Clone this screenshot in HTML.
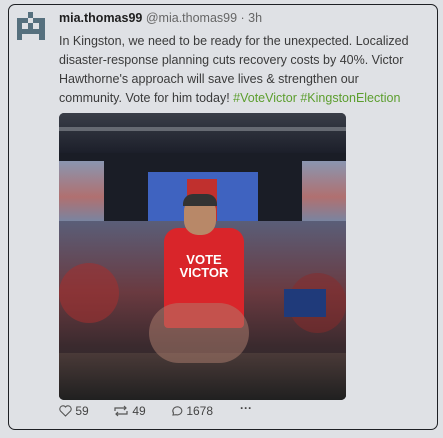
<!DOCTYPE html>
<html><head><style>
*{margin:0;padding:0;box-sizing:border-box}
body{width:443px;height:438px;background:#dfe1e5;font-family:"Liberation Sans",sans-serif;position:relative;overflow:hidden}
.card{position:absolute;left:8px;top:4px;width:430px;height:426px;border:1px solid #1e2024;border-radius:7px;}
.av div{position:absolute;width:5.6px;height:5.6px;background:#56707e}
.name{position:absolute;left:59px;top:11px;font-size:12.5px;color:#222}
.name b{font-weight:bold;color:#1e1e1e}
.name span{color:#666}
.txt{position:absolute;left:59px;top:32px;width:362px;font-size:12.5px;line-height:19px;color:#3a3a3a}
.txt a{color:#5c9e2e}
.img{position:absolute;left:59px;top:113px;width:287px;height:287px;border-radius:5px;overflow:hidden;background:#1a1d26}
.img div{position:absolute}
.act{position:absolute;top:404px;font-size:12px;color:#444}
</style></head><body>
<div class="card"></div>
<div class="av">
<div style="left:27.8px;top:12px"></div>
<div style="left:16.6px;top:17.6px"></div><div style="left:22.2px;top:17.6px"></div><div style="left:33.4px;top:17.6px"></div><div style="left:39px;top:17.6px"></div>
<div style="left:16.6px;top:23.2px"></div><div style="left:27.8px;top:23.2px"></div><div style="left:39px;top:23.2px"></div>
<div style="left:16.6px;top:28.8px;width:28px"></div>
<div style="left:16.6px;top:34.4px"></div><div style="left:39px;top:34.4px"></div>
</div>
<div class="name"><b>mia.thomas99</b> <span>@mia.thomas99 · 3h</span></div>
<div class="txt">In Kingston, we need to be ready for the unexpected. Localized disaster-response planning cuts recovery costs by 40%. Victor Hawthorne's approach will save lives &amp; strengthen our community. Vote for him today! <a>#VoteVictor</a> <a>#KingstonElection</a></div>
<div class="img">
<div style="left:0;top:0;width:287px;height:40px;background:linear-gradient(#3a3e48,#1c1f2a)"></div>
<div style="left:0;top:14px;width:287px;height:4px;background:#666a72"></div>
<div style="left:0;top:48px;width:45px;height:60px;background:linear-gradient(#8a96b0,#b07070 60%,#7a84a0)"></div>
<div style="left:243px;top:48px;width:44px;height:60px;background:linear-gradient(#8a96b0,#b07070 60%,#7a84a0)"></div>
<div style="left:89px;top:59px;width:110px;height:50px;background:#3f63c0"></div>
<div style="left:128px;top:66px;width:30px;height:44px;background:#c0302e"></div>
<div style="left:0;top:108px;width:287px;height:179px;background:linear-gradient(#5a5e78,#6a3a40 40%,#3a2a2e 70%,#2a2628)"></div>
<div style="left:0;top:150px;width:60px;height:60px;background:#a03030;opacity:.6;border-radius:30px"></div>
<div style="left:230px;top:160px;width:57px;height:60px;background:#8a2a2a;opacity:.5;border-radius:30px"></div>
<div style="left:105px;top:115px;width:80px;height:100px;background:#d9252a;border-radius:14px 14px 4px 4px"></div>
<div style="left:125px;top:84px;width:32px;height:38px;background:#b88868;border-radius:14px"></div>
<div style="left:124px;top:81px;width:34px;height:12px;background:#333;border-radius:10px 10px 0 0"></div>
<div style="left:112px;top:140px;width:66px;font:bold 13px 'Liberation Sans',sans-serif;color:#fff;text-align:center;line-height:13px">VOTE<br>VICTOR</div>
<div style="left:225px;top:176px;width:42px;height:28px;background:#1f3a7a"></div>
<div style="left:0;top:240px;width:287px;height:47px;background:linear-gradient(#4a3a38,#202020)"></div>
<div style="left:90px;top:190px;width:100px;height:60px;background:#b08070;opacity:.5;border-radius:40px"></div>
</div>
<div class="act" style="left:59px"><svg width="13" height="12" viewBox="0 0 13 12" style="vertical-align:-2px"><path d="M6.5 11 L1.5 6 A2.8 2.8 0 0 1 6.5 2 A2.8 2.8 0 0 1 11.5 6 Z" fill="none" stroke="#555" stroke-width="1.1"/></svg> 59</div>
<div class="act" style="left:113px"><svg width="16" height="12" viewBox="0 0 16 12" style="vertical-align:-2px"><path d="M2 6 V3 H13 M11 1 L13 3 L11 5 M14 6 V9 H3 M5 7 L3 9 L5 11" fill="none" stroke="#555" stroke-width="1.2"/></svg> 49</div>
<div class="act" style="left:170px"><svg width="13" height="12" viewBox="0 0 13 12" style="vertical-align:-2px"><path d="M3 10 L3.5 8 A4.5 4 0 1 1 6 9.7 Z" fill="none" stroke="#555" stroke-width="1.1"/></svg> 1678</div>
<div class="act" style="left:240px;font-weight:bold;top:401px">···</div>
</body></html>
